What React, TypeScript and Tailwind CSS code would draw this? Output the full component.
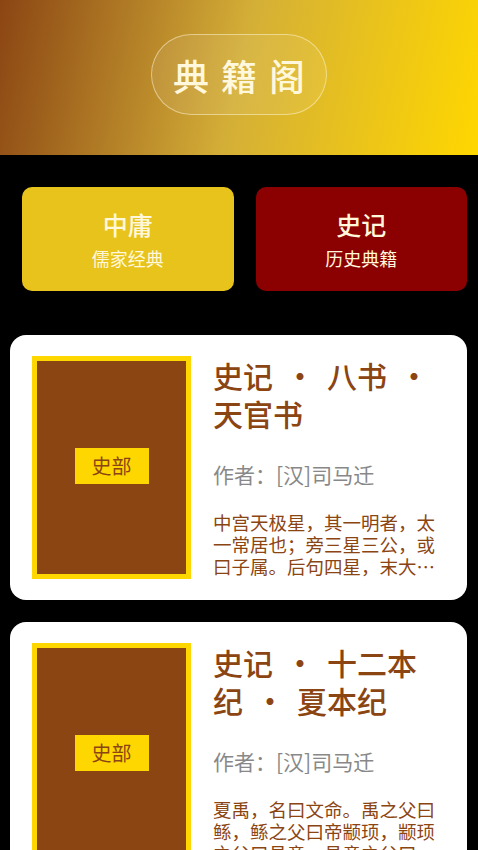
import React from "react";

const FONT = { fontFamily: '"Noto Sans CJK SC", "Noto Sans", sans-serif' };

type Book = { title: string[]; author: string; desc: string; tag: string };

const books: Book[] = [
  {
    title: ["史记", "八书", "天官书"],
    author: "作者：[汉]司马迁",
    desc: "中宫天极星，其一明者，太一常居也；旁三星三公，或曰子属。后句四星，末大星正妃，余三星后宫之属也。",
    tag: "史部",
  },
  {
    title: ["史记", "十二本纪", "夏本纪"],
    author: "作者：[汉]司马迁",
    desc: "夏禹，名曰文命。禹之父曰鲧，鲧之父曰帝颛顼，颛顼之父曰昌意，昌意之父曰黄帝。禹者，黄帝之玄孙而帝颛顼之孙也。",
    tag: "史部",
  },
];

function Title({ parts }: { parts: string[] }) {
  return (
    <div className="text-[30px] leading-[38px] font-medium text-[#8B4513] break-all">
      {parts.map((p, i) => (
        <React.Fragment key={i}>
          {i > 0 && <span className="inline-block w-[54px] text-center">·</span>}
          {p}
        </React.Fragment>
      ))}
    </div>
  );
}

function BookCard({ b }: { b: Book }) {
  return (
    <div className="bg-white rounded-[16px] p-[21px] pl-[22px] flex gap-[22px]">
      <div className="w-[159px] h-[223px] shrink-0 border-[5px] border-[#FFD700] bg-[#8B4513] flex items-center justify-center">
        <div className="w-[74px] h-[36px] bg-[#FFD700] flex items-center justify-center text-[20px] text-[#8B4513] mt-[-4px]">
          {b.tag}
        </div>
      </div>
      <div className="flex-1 min-w-0 flex flex-col">
        <Title parts={b.title} />
        <div className="mt-[28px] text-[21px] leading-[28px] text-[#888888]">{b.author}</div>
        <div className="mt-[23px] text-[18.5px] leading-[22px] text-[#8B4513] line-clamp-3">
          {b.desc}
        </div>
      </div>
    </div>
  );
}

export default function App() {
  return (
    <div className="min-h-[850px] bg-black" style={FONT}>
      <div className="h-[155px] bg-[linear-gradient(102deg,#8B4513_0%,#D4AF37_50%,#FFD700_100%)] flex items-center justify-center">
        <div className="w-[176px] h-[81px] mt-[-6px] rounded-full border border-[rgba(255,248,220,0.5)] bg-[rgba(255,255,255,0.08)] flex items-center justify-center">
          <span className="text-[36px] leading-none font-medium tracking-[12px] pl-[12px] text-[#FFF8DC]">典籍阁</span>
        </div>
      </div>
      <div className="flex gap-[22px] pl-[22px] pr-[11px] pt-[32px]">
        <div className="flex-1 h-[104px] rounded-[10px] bg-[#E8C31B] flex flex-col items-center justify-center">
          <div className="text-[25px] leading-[32px] font-medium text-[#FFF8DC]">中庸</div>
          <div className="text-[18px] leading-[24px] mt-[6px] text-[#FFF8DC]">儒家经典</div>
        </div>
        <div className="flex-1 h-[104px] rounded-[10px] bg-[#8B0000] flex flex-col items-center justify-center">
          <div className="text-[25px] leading-[32px] font-medium text-[#FFF8DC]">史记</div>
          <div className="text-[18px] leading-[24px] mt-[6px] text-[#FFF8DC]">历史典籍</div>
        </div>
      </div>
      <div className="px-[10px] pr-[11px] pt-[44px] flex flex-col gap-[22px]">
        {books.map((b, i) => (
          <BookCard key={i} b={b} />
        ))}
      </div>
    </div>
  );
}
